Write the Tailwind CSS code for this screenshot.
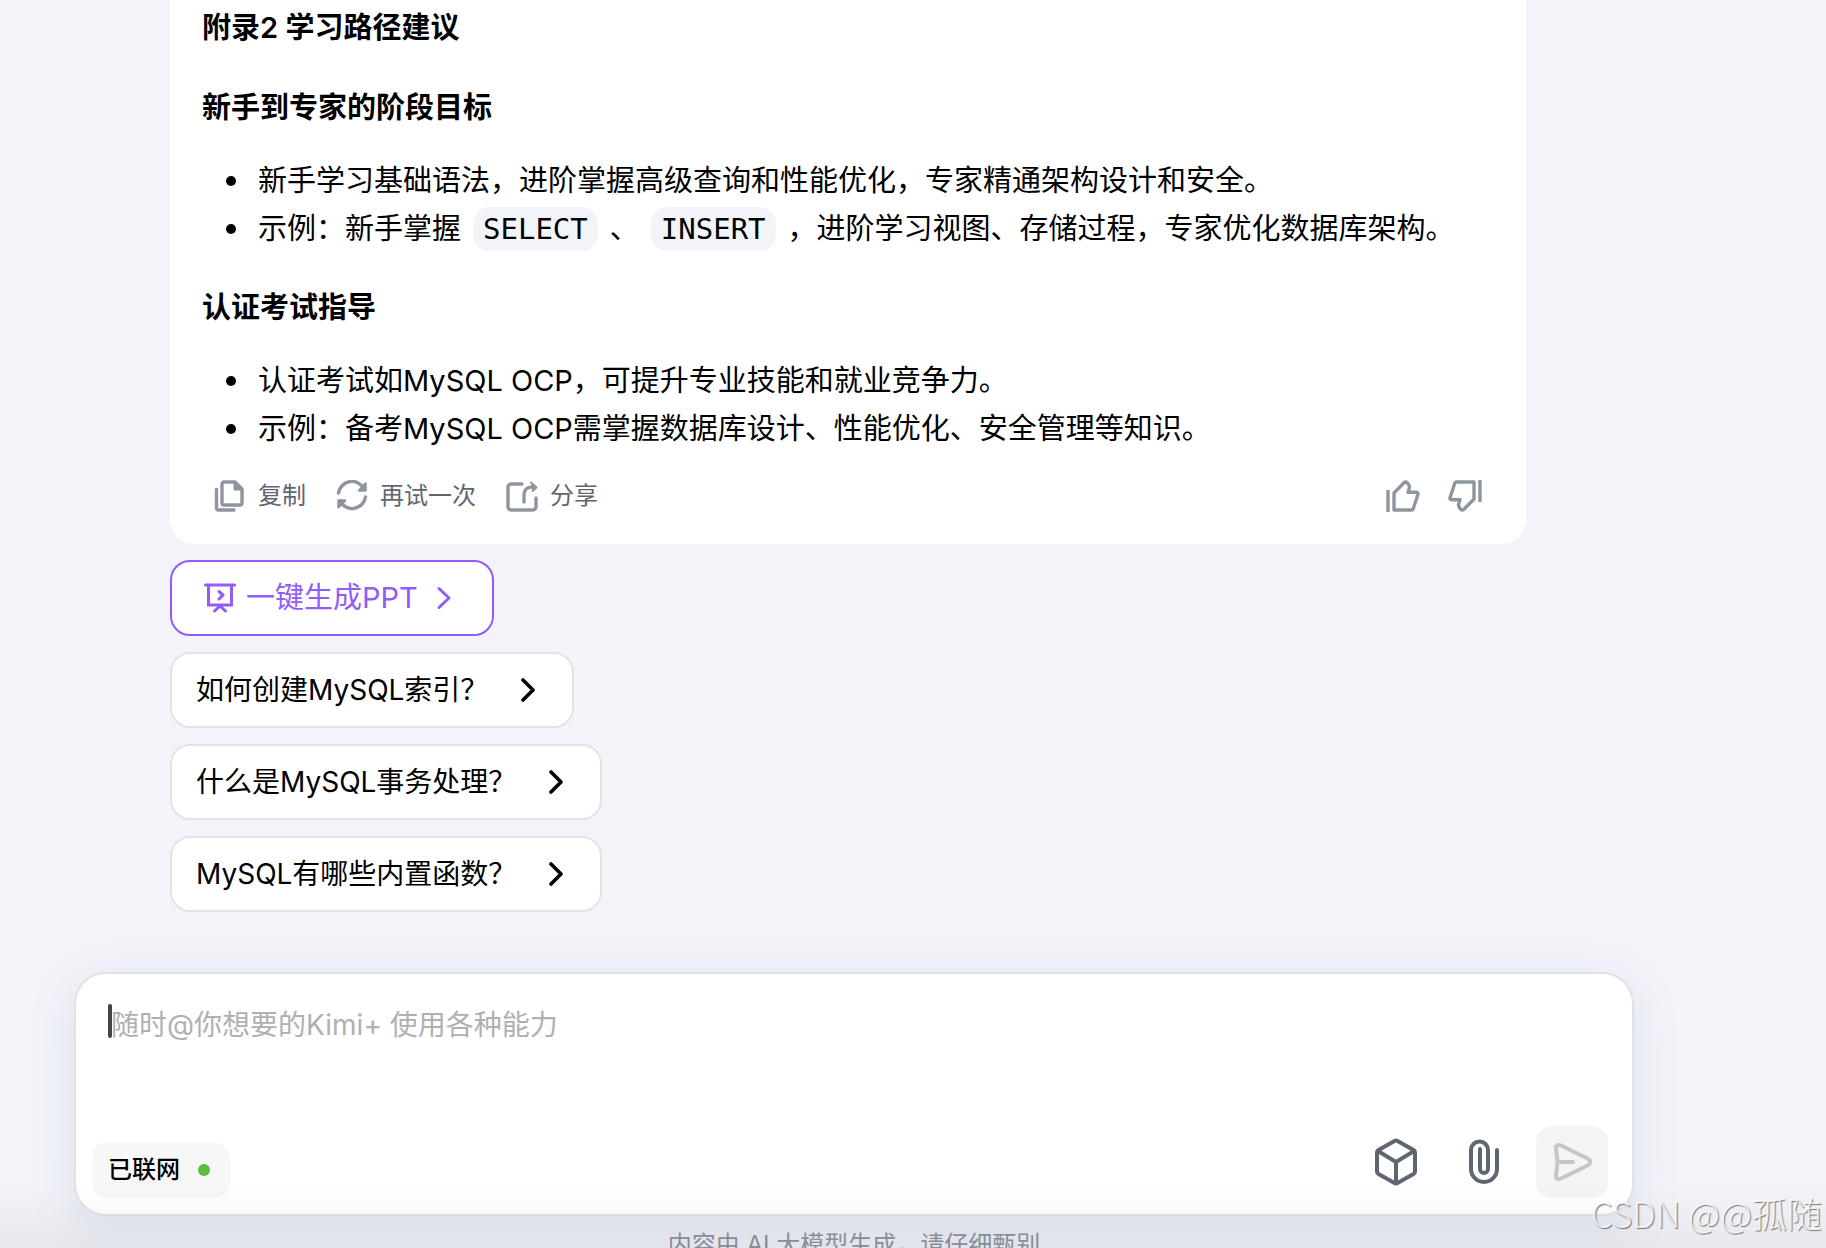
<!DOCTYPE html>
<html lang="zh-CN">
<head>
    <meta charset="UTF-8">
    <meta name="viewport" content="width=device-width, initial-scale=1.0">
    <title>Kimi</title>
    <script src="https://cdn.jsdelivr.net/npm/@tailwindcss/browser@4"></script>
</head>
<body class="relative h-screen overflow-hidden bg-[#f3f4fa] font-['Inter','Noto_Sans_CJK_SC',sans-serif] text-[29px] leading-[48px] text-black">
    <main class="pl-[74px] pr-[192px]">
        <!-- Conversation -->
        <div class="ml-24 mr-[108px]">
            <article class="rounded-b-3xl bg-white px-8 pt-1 pb-7">
                <h2 class="text-[29px] font-semibold">附录2 学习路径建议</h2>
                <h3 class="mt-8 text-[29px] font-semibold">新手到专家的阶段目标</h3>
                <ul class="mt-[25px] pl-14">
                    <li class="relative before:absolute before:top-[19px] before:-left-8 before:size-[10px] before:rounded-full before:bg-black before:content-['']">新手学习基础语法，进阶掌握高级查询和性能优化，专家精通架构设计和安全。</li>
                    <li class="relative before:absolute before:top-[19px] before:-left-8 before:size-[10px] before:rounded-full before:bg-black before:content-['']">示例：新手掌握<code class="mx-3 rounded-2xl bg-[#f3f4fa] px-[10px] py-[5px] font-['DejaVu_Sans_Mono',monospace] text-[29px] leading-none">SELECT</code>、<code class="mx-3 rounded-2xl bg-[#f3f4fa] px-[10px] py-[5px] font-['DejaVu_Sans_Mono',monospace] text-[29px] leading-none">INSERT</code>，进阶学习视图、存储过程，专家优化数据库架构。</li>
                </ul>
                <h3 class="mt-[31px] text-[29px] font-semibold">认证考试指导</h3>
                <ul class="mt-[25px] pl-14">
                    <li class="relative before:absolute before:top-[19px] before:-left-8 before:size-[10px] before:rounded-full before:bg-black before:content-['']">认证考试如MySQL OCP，可提升专业技能和就业竞争力。</li>
                    <li class="relative before:absolute before:top-[19px] before:-left-8 before:size-[10px] before:rounded-full before:bg-black before:content-['']">示例：备考MySQL OCP需掌握数据库设计、性能优化、安全管理等知识。</li>
                </ul>

                <!-- Message actions -->
                <div class="mt-[23px] flex h-10 items-center gap-[30px] px-3 text-[24px] text-[#5f6672]">
                    <button type="button" class="flex items-center gap-3">
                        <svg class="size-8 text-[#8f959e]" viewBox="0 0 32 32" fill="none" stroke="currentColor" stroke-width="3.400" stroke-linecap="round" stroke-linejoin="round">
                            <path d="M10 2h11l7 7V23a2 2 0 0 1-2 2H10a2 2 0 0 1-2-2V4a2 2 0 0 1 2-2z"/>
                            <path d="M20 2v8h8l-7-8z" fill="currentColor" stroke-width="1"/>
                            <path d="M2.500 9.500V28a2 2 0 0 0 2 2H20"/>
                        </svg>
                        <span>复制</span>
                    </button>
                    <button type="button" class="flex items-center gap-3">
                        <svg class="size-8 text-[#8f959e]" viewBox="0 0 32 32" fill="none" stroke="currentColor" stroke-width="3.400" stroke-linecap="round" stroke-linejoin="round">
                            <path d="M2.500 13A13.500 13.500 0 0 1 28 9"/>
                            <path d="M29.500 17A13.500 13.500 0 0 1 4 21"/>
                            <path d="M29.500 3.500v7H23zM2.500 27v-6.500H9z" fill="currentColor" stroke-width="2.500"/>
                        </svg>
                        <span>再试一次</span>
                    </button>
                    <button type="button" class="flex items-center gap-3">
                        <svg class="size-8 text-[#8f959e]" viewBox="0 0 32 32" fill="none" stroke="currentColor" stroke-width="3.400" stroke-linecap="round" stroke-linejoin="round">
                            <path d="M16 4H5a3 3 0 0 0-3 3V27a3 3 0 0 0 3 3H27a3 3 0 0 0 3-3V18"/>
                            <path d="M18 22V15c0-5 3-8 7.500-8H28"/>
                            <path d="M25 2.500l5.500 5-4 3.500" stroke-width="2" fill="currentColor"/>
                        </svg>
                        <span>分享</span>
                    </button>
                    <div class="ml-auto flex gap-7">
                        <button type="button" aria-label="赞">
                            <svg class="h-8 w-[34px] text-[#8f959e]" viewBox="0 0 34 32" fill="none" stroke="currentColor" stroke-width="3.400" stroke-linejoin="round">
                                <path d="M2 10v22"/>
                                <path d="M8 30V13L18 2.800c1-1 2.300-1 3.300 0 2 2 2.500 3.500 2 5.500l-1.300 4h8.500a1.500 1.500 0 0 1 1.500 2l-4.700 14.200a2 2 0 0 1-2 1.500z"/>
                            </svg>
                        </button>
                        <button type="button" aria-label="踩">
                            <svg class="h-8 w-[34px] text-[#8f959e]" viewBox="0 0 34 32" fill="none" stroke="currentColor" stroke-width="3.400" stroke-linejoin="round">
                                <path d="M32 0v22"/>
                                <path d="M26 2V19L16 29.200c-1 1-2.300 1-3.300 0-2-2-2.500-3.500-2-5.500l1.300-4H3.500a1.500 1.500 0 0 1-1.500-2L6.700 3.500a2 2 0 0 1 2-1.500z"/>
                            </svg>
                        </button>
                    </div>
                </div>
            </article>

            <!-- Suggestions -->
            <div class="mt-4 flex flex-col items-start gap-4">
                <button type="button" class="flex h-[76px] items-center rounded-[20px] border-2 border-[#915cf7] bg-white pr-9 pl-8 text-[#915cf7]">
                    <svg class="mr-[10px] size-8" viewBox="0 0 32 32" fill="none" stroke="currentColor" stroke-width="3" stroke-linecap="round">
                        <path d="M1.500 3h29M4.500 3.500V23h23V3.500" />
                        <path d="M10.500 29l5.500-5 5.500 5M15 9.500l4 3.500-4 4" stroke-linejoin="round"/>
                    </svg>
                    <span>一键生成PPT</span>
                    <svg class="ml-[14px] size-6" viewBox="0 0 24 24" fill="none" stroke="currentColor" stroke-width="3" stroke-linecap="round" stroke-linejoin="round"><path d="M7 2.500l10 9.500-10 9.500"/></svg>
                </button>
                <button type="button" class="flex h-[76px] items-center gap-7 rounded-[20px] border-2 border-[#e4e4e6] bg-white pr-8 pl-6 text-[28px]">
                    <span>如何创建MySQL索引？</span>
                    <svg class="size-6" viewBox="0 0 24 24" fill="none" stroke="currentColor" stroke-width="3.600" stroke-linecap="round" stroke-linejoin="round"><path d="M7 2l10 10-10 10"/></svg>
                </button>
                <button type="button" class="flex h-[76px] items-center gap-7 rounded-[20px] border-2 border-[#e4e4e6] bg-white pr-8 pl-6 text-[28px]">
                    <span>什么是MySQL事务处理？</span>
                    <svg class="size-6" viewBox="0 0 24 24" fill="none" stroke="currentColor" stroke-width="3.600" stroke-linecap="round" stroke-linejoin="round"><path d="M7 2l10 10-10 10"/></svg>
                </button>
                <button type="button" class="flex h-[76px] items-center gap-7 rounded-[20px] border-2 border-[#e4e4e6] bg-white pr-8 pl-6 text-[28px]">
                    <span>MySQL有哪些内置函数？</span>
                    <svg class="size-6" viewBox="0 0 24 24" fill="none" stroke="currentColor" stroke-width="3.600" stroke-linecap="round" stroke-linejoin="round"><path d="M7 2l10 10-10 10"/></svg>
                </button>
            </div>
        </div>

        <!-- Composer -->
        <form class="relative mt-[60px] rounded-[32px] border-2 border-[#e2e2e4] bg-white pt-[27px] pr-6 pb-4 pl-4 shadow-[0_10px_48px_rgba(90,115,160,0.14)]">
            <span class="absolute top-[30px] left-8 h-[34px] w-1 rounded-full bg-[#444]"></span>
            <textarea aria-label="输入消息" placeholder="随时@你想要的Kimi+ 使用各种能力" class="block h-[109px] w-full resize-none pl-[19px] text-[28px] outline-none placeholder:text-[#b0b0b0]"></textarea>
            <div class="mt-4 flex items-end">
                <button type="button" class="flex h-14 items-center gap-[18px] rounded-2xl bg-[#f7f7f7] pr-5 pl-4 text-[24px] font-medium">
                    已联网
                    <span class="size-3 rounded-full bg-[#5bbd3e]"></span>
                </button>
                <div class="ml-auto flex h-[72px] items-center">
                    <button type="button" aria-label="工具" class="mr-10">
                        <svg class="size-12 text-[#5f6672]" viewBox="0 0 48 48" fill="none" stroke="currentColor" stroke-width="4" stroke-linecap="round" stroke-linejoin="round">
                            <path d="M22.500 3a3 3 0 0 1 3 0l16 9a3 3 0 0 1 1.500 2.600V33.400a3 3 0 0 1-1.500 2.600l-16 9a3 3 0 0 1-3 0l-16-9A3 3 0 0 1 5 33.400V14.600A3 3 0 0 1 6.500 12z"/>
                            <path d="M6 13l18 11 18-11M24 24v21"/>
                        </svg>
                    </button>
                    <button type="button" aria-label="附件" class="mr-7">
                        <svg class="size-12 text-[#5f6672]" viewBox="0 0 48 48" fill="none" stroke="currentColor" stroke-width="4" stroke-linecap="round">
                            <path d="M37 12v19a13 13 0 0 1-26 0V12a8.500 8.500 0 0 1 17 0v19a4 4 0 0 1-8 0V11"/>
                        </svg>
                    </button>
                    <button type="submit" aria-label="发送" class="flex size-[72px] items-center justify-center rounded-2xl bg-[#f4f4f4] text-[#c6c6c6]">
                        <svg class="size-10" viewBox="0 0 40 40" fill="none" stroke="currentColor" stroke-width="4" stroke-linecap="round" stroke-linejoin="round">
                            <path d="M4 6.500C3.700 3.500 5.500 2.200 8.500 3.300L35.500 16.500c4 2 4 5 0 7L8.500 36.700C5.500 37.800 3.700 36.500 4 33.500L5.500 20z"/>
                            <path d="M6 20h15"/>
                        </svg>
                    </button>
                </div>
            </div>
        </form>
        <p class="mt-[5px] text-center text-[24px] text-[#8f959e]">内容由 AI 大模型生成，请仔细甄别</p>
    </main>

    <div class="pointer-events-none absolute inset-x-0 bottom-0 h-16 bg-gradient-to-t from-black/5 to-transparent"></div>
    <div class="pointer-events-none absolute right-1 bottom-[11px] font-['Noto_Sans_CJK_SC',sans-serif] text-[35px] font-light text-white/80 [text-shadow:1px_1px_1px_#777]">CSDN @@孤随</div>
</body>
</html>
